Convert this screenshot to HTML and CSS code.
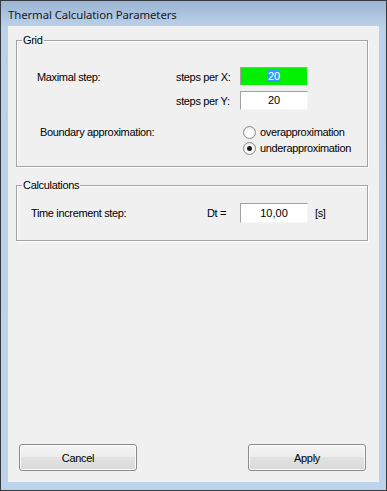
FILE: index.html
```html
<!DOCTYPE html>
<html lang="en">
<head>
    <meta charset="UTF-8">
    <title>Thermal Calculation Parameters</title>
    <link rel="stylesheet" href="styles.css">
</head>
<body>

    <div class="window">
        <!-- Barra de titulo -->
        <div class="title-bar">Thermal Calculation Parameters</div>

        <div class="client">
            <!-- Grid -->
            <fieldset class="group group-grid">
                <legend>Grid</legend>
                <div class="grid-rows">
                    <span class="label">Maximal step:</span>
                    <span class="label">steps per X:</span>
                    <div class="textbox textbox-active"><span class="selected">20</span></div>

                    <span></span>
                    <span class="label">steps per Y:</span>
                    <div class="textbox">20</div>

                    <span class="label label-boundary">Boundary approximation:</span>
                    <div class="radio-group">
                        <label class="radio"><span class="radio-dot"></span>overapproximation</label>
                        <label class="radio"><span class="radio-dot checked"></span>underapproximation</label>
                    </div>
                </div>
            </fieldset>

            <!-- Calculations -->
            <fieldset class="group group-calc">
                <legend>Calculations</legend>
                <div class="calc-row">
                    <span class="label calc-label">Time increment step:</span>
                    <span class="label dt-label">Dt =</span>
                    <div class="textbox">10,00</div>
                    <span class="label unit">[s]</span>
                </div>
            </fieldset>

            <!-- Botones -->
            <div class="buttons">
                <button class="btn">Cancel</button>
                <button class="btn">Apply</button>
            </div>
        </div>
    </div>

</body>
</html>
```

FILE: styles.css
```css
/* Estilos generales */
body {
    margin: 0;
    font-family: "Liberation Sans", Arial, sans-serif;
    font-size: 11px;
    color: #000;
}

/* Marco de la ventana */
.window {
    width: 387px;
    height: 491px;
    box-sizing: border-box;
    border: 1px solid #353a40;
    background: linear-gradient(#9ab4d3 0, #bcd2ea 26px, #bdd3eb 100%);
    padding: 0 7px 8px 7px;
    display: flex;
    flex-direction: column;
}

.title-bar {
    height: 25px;
    line-height: 28px;
    font-family: "Noto Sans", sans-serif;
    font-size: 11.4px;
    letter-spacing: -0.1px;
    color: #1a1a1a;
    white-space: nowrap;
}

/* Area cliente */
.client {
    flex: 1;
    background-color: #f0f0f0;
    padding: 8px 11px 11px 8px;
    display: flex;
    flex-direction: column;
}

/* Group box */
.group {
    margin: 0;
    padding: 0;
    min-width: 0;
    border: 1px solid #a3a3a3;
    box-shadow: inset 1px 1px 0 #fff, 1px 1px 0 #fff;
}

.group legend {
    margin-left: 5px;
    padding: 0 1px;
    line-height: 13px;
    letter-spacing: -0.3px;
}

.label {
    letter-spacing: -0.35px;
    white-space: nowrap;
}

/* Filas del grid */
.grid-rows {
    display: grid;
    grid-template-columns: 139px 64px 68px;
    grid-template-rows: 19px 19px;
    row-gap: 5px;
    align-items: center;
    padding: 20px 0 10px 20px;
}

.label-boundary {
    grid-column: 1 / 3;
    align-self: start;
    margin: 9px 0 0 3px;
    line-height: 16px;
}

.radio-group {
    margin-top: 9px;
    padding-left: 3px;
    display: flex;
    flex-direction: column;
}

.radio {
    display: flex;
    align-items: center;
    height: 16px;
    letter-spacing: -0.35px;
    white-space: nowrap;
}

.radio-dot {
    width: 11px;
    height: 11px;
    border: 1px solid #8a8a8a;
    border-radius: 50%;
    background: radial-gradient(circle at 50% 60%, #ffffff 30%, #dcdcdc 100%);
    margin-right: 4px;
    position: relative;
    flex: none;
}

.radio-dot.checked::after {
    content: "";
    position: absolute;
    left: 3px;
    top: 3px;
    width: 5px;
    height: 5px;
    border-radius: 50%;
    background: #1c1c1c;
}

/* Cajas de texto */
.textbox {
    height: 19px;
    box-sizing: border-box;
    border-top: 1px solid #a0a0a0;
    border-left: 1px solid #a0a0a0;
    border-right: 1px solid #f6f6f6;
    border-bottom: 1px solid #f6f6f6;
    background-color: #fff;
    text-align: center;
    line-height: 17px;
}

.textbox-active {
    background-color: #00f000;
}

.selected {
    background-color: #3399ff;
    color: #fff;
}

/* Calculations */
.group-calc {
    margin-top: 12px;
}

.calc-row {
    display: flex;
    align-items: center;
    padding: 11px 0 17px 14px;
}

.calc-label {
    width: 176px;
    flex: none;
}

.dt-label {
    width: 33px;
    flex: none;
}

.calc-row .textbox {
    width: 68px;
    height: 20px;
    line-height: 18px;
    flex: none;
}

.unit {
    margin-left: 7px;
}

/* Botones */
.buttons {
    margin-top: auto;
    display: flex;
    justify-content: space-between;
    padding: 0 2px 0 3px;
}

.btn {
    width: 118px;
    height: 27px;
    font-family: "Liberation Sans", Arial, sans-serif;
    font-size: 11px;
    letter-spacing: -0.3px;
    color: #000;
    border: 1px solid #8c8c8c;
    border-radius: 3px;
    background: linear-gradient(#f4f4f4, #ececec 50%, #e2e2e2 50%, #d9d9d9);
    box-shadow: inset 0 0 0 1px #fbfbfb;
    padding: 0;
}
```
